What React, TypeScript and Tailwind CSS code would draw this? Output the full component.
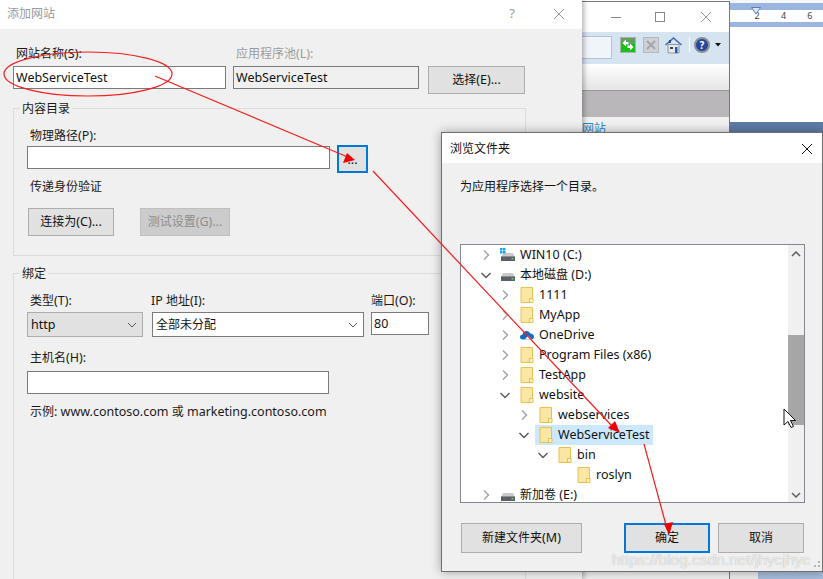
import React from "react";

const FONT = { fontFamily: '"Noto Sans", "Noto Sans CJK SC", sans-serif' };

function T({ s }: { s: string }) {
  const parts = s.split(/([\u3000-\u9fff\uff00-\uffef]+)/).filter(Boolean);
  return (
    <>
      {parts.map((p, i) =>
        /[\u3000-\u9fff\uff00-\uffef]/.test(p) ? (
          <span key={i}>{p}</span>
        ) : (
          <span key={i} className="text-[12.5px]">
            {p}
          </span>
        ),
      )}
    </>
  );
}

function Folder() {
  return (
    <svg width="14" height="17" viewBox="0 0 14 17" className="shrink-0">
      <path d="M1 .5H12.5V15.5H1Z" fill="#fbe7a4" stroke="#e8c04f" />
      <path d="M9.5 15.5V11.5H13V15.5Z" fill="#fff3c4" stroke="#e8c04f" />
    </svg>
  );
}

function Drive({ win }: { win?: boolean }) {
  return (
    <svg width="16" height="14" viewBox="0 0 16 14" className="shrink-0">
      <path d="M2 6.5 3.5 5H12.500L14 6.500V8H2Z" fill="#c9c9c9" />
      <rect x="1" y="8" width="14" height="5" fill="#5c6066" />
      <rect x="1" y="8" width="14" height="1" fill="#8d9196" />
      <rect x="11.500" y="10" width="2" height="1.500" fill="#4fd35f" />
      {win && (
        <g fill="#12a5ec">
          <rect x="0" y="0" width="2.500" height="2.500" />
          <rect x="3" y="0" width="2.500" height="2.500" />
          <rect x="0" y="3" width="2.500" height="2.500" />
          <rect x="3" y="3" width="2.500" height="2.500" />
        </g>
      )}
    </svg>
  );
}

function Cloud() {
  return (
    <svg width="14" height="10" viewBox="0 0 14 10" className="shrink-0">
      <path d="M3 9.500C1 9.500 0 8.300 0 7 0 5.700 1 4.800 2.300 4.800 2.800 2.500 4.500 1 6.500 1 8.300 1 9.600 2 10.300 3.500 12.400 3.500 14 5 14 7 14 8.500 13 9.500 11.500 9.500Z" fill="#0f6cc4" />
      <path d="M5 9.500 8 5.500 12 9.500Z" fill="#ffffff" />
    </svg>
  );
}

function Chev({ open }: { open?: boolean }) {
  return (
    <svg width="16" height="16" viewBox="0 0 16 16" className="shrink-0">
      {open ? (
        <path d="M3.500 6 8 10.500 12.500 6" fill="none" stroke="#5b5b5b" strokeWidth="1.500" />
      ) : (
        <path d="M6 3.500 10.500 8 6 12.500" fill="none" stroke="#a6a6a6" strokeWidth="1.500" />
      )}
    </svg>
  );
}

const PAD = ["pl-[17px]", "pl-[36px]", "pl-[55px]", "pl-[74px]", "pl-[93px]"];

type Row = { d: number; label: string; icon: "win" | "drive" | "folder" | "cloud"; chev?: "open" | "closed"; sel?: boolean };

const ROWS: Row[] = [
  { d: 0, label: "WIN10 (C:)", icon: "win", chev: "closed" },
  { d: 0, label: "本地磁盘 (D:)", icon: "drive", chev: "open" },
  { d: 1, label: "1111", icon: "folder", chev: "closed" },
  { d: 1, label: "MyApp", icon: "folder", chev: "closed" },
  { d: 1, label: "OneDrive", icon: "cloud", chev: "closed" },
  { d: 1, label: "Program Files (x86)", icon: "folder", chev: "closed" },
  { d: 1, label: "TestApp", icon: "folder", chev: "closed" },
  { d: 1, label: "website", icon: "folder", chev: "open" },
  { d: 2, label: "webservices", icon: "folder", chev: "closed" },
  { d: 2, label: "WebServiceTest", icon: "folder", chev: "open", sel: true },
  { d: 3, label: "bin", icon: "folder", chev: "open" },
  { d: 4, label: "roslyn", icon: "folder" },
  { d: 0, label: "新加卷 (E:)", icon: "drive", chev: "closed" },
];

function TreeRow({ r }: { r: Row }) {
  return (
    <div className={`flex h-[20px] shrink-0 items-center ${PAD[r.d]}`}>
      <span className="w-[16px] shrink-0">{r.chev && <Chev open={r.chev === "open"} />}</span>
      <div className={`ml-[3px] flex h-[20px] items-center gap-[5px] pl-[4px] pr-[4px] ${r.sel ? "bg-[#cce8ff]" : ""}`}>
        <span className="flex w-[14px] justify-center">
          {r.icon === "folder" && <Folder />}
          {r.icon === "cloud" && <Cloud />}
          {r.icon === "win" && <Drive win />}
          {r.icon === "drive" && <Drive />}
        </span>
        <span className="whitespace-nowrap text-[12px] leading-[20px] text-[#111]">
          <T s={r.label} />
        </span>
      </div>
    </div>
  );
}

function Label({ s, muted, className = "" }: { s: string; muted?: boolean; className?: string }) {
  return (
    <div className={`text-[12px] leading-[18px] whitespace-nowrap ${muted ? "text-[#9c9c9c]" : "text-[#1a1a1a]"} ${className}`}>
      <T s={s} />
    </div>
  );
}

function Input({ value, disabled, className = "" }: { value?: string; disabled?: boolean; className?: string }) {
  return (
    <div className={`flex h-[23px] items-center border border-[#7a7a7a] pl-[2px] pt-[1px] text-[12px] text-[#111] ${disabled ? "bg-[#f0f0f0]" : "bg-white"} ${className}`}>
      {value && <T s={value} />}
    </div>
  );
}

function Btn({ s, disabled, primary, className = "" }: { s: string; disabled?: boolean; primary?: boolean; className?: string }) {
  const tone = primary
    ? "border-2 border-[#0078d7] bg-[#e1e1e1] text-[#111]"
    : disabled
      ? "border border-[#bfbfbf] bg-[#cccccc] text-[#8e8e8e]"
      : "border border-[#adadad] bg-[#e1e1e1] text-[#111]";
  return (
    <div className={`flex shrink-0 items-center justify-center whitespace-nowrap text-[12px] ${tone} ${className}`}>
      <T s={s} />
    </div>
  );
}

function Group({ title, className = "", children }: { title: string; className?: string; children: React.ReactNode }) {
  return (
    <fieldset className={`ml-[13px] w-[513px] border border-[#dcdcdc] ${className}`}>
      <legend className="ml-[6px] h-[16px] px-[2px] text-[12px] leading-[18px] text-[#1a1a1a]">{title}</legend>
      <div className="pl-[13px]">{children}</div>
    </fieldset>
  );
}

function SelectBox({ text, gray, className = "" }: { text: string; gray?: boolean; className?: string }) {
  return (
    <div className={`flex h-[25px] items-center justify-between pl-[3px] pr-[3px] text-[12px] text-[#111] ${gray ? "border border-[#adadad] bg-[#e1e1e1]" : "border border-[#7a7a7a] bg-white"} ${className}`}>
      <span className={gray ? "pt-[2px]" : ""}>
        <T s={text} />
      </span>
      <svg width="14" height="14" viewBox="0 0 14 14">
        <path d="M3 5 7 9 11 5" fill="none" stroke="#555" strokeWidth="1" />
      </svg>
    </div>
  );
}

function MainDialog() {
  return (
    <div className="absolute left-0 top-0 h-[579px] w-[582px] overflow-hidden bg-[#f0f0f0] shadow-[2px_0_5px_rgba(0,0,0,0.3)]">
      <div className="flex h-[29px] items-center justify-between bg-white pb-[2px] pl-[7px] text-[12px] text-[#9a9a9a]">
        <span>添加网站</span>
        <div className="flex items-center">
          <span className="mr-[38px] text-[13px] text-[#999]">?</span>
          <svg width="12" height="12" viewBox="0 0 12 12" className="mr-[17px]">
            <path d="M1 1 11 11M11 1 1 11" stroke="#999" strokeWidth="1" />
          </svg>
        </div>
      </div>
      <div className="pt-[16px]">
        <div className="flex pl-[13px]">
          <div className="w-[213px]">
            <Label s="网站名称(S):" className="h-[21px] pl-[3px]" />
            <Input value="WebServiceTest" />
          </div>
          <div className="ml-[7px] w-[186px]">
            <Label muted s="应用程序池(L):" className="h-[21px] pl-[3px]" />
            <Input disabled value="WebServiceTest" />
          </div>
          <Btn s="选择(E)..." className="ml-[9px] mt-[21px] h-[28px] w-[97px]" />
        </div>
        <Group title="内容目录" className="mt-[6px] h-[156px]">
          <Label s="物理路径(P):" className="mt-[11px] h-[19px] pl-[3px]" />
          <div className="flex items-start">
            <Input className="w-[303px]" />
            <Btn primary s="..." className="ml-[7px] -mt-[1px] h-[28px] w-[31px] pt-[3px]" />
          </div>
          <Label s="传递身份验证" className="mt-[5px] h-[16px] pl-[3px]" />
          <div className="ml-[1px] mt-[14px] flex gap-[26px]">
            <Btn s="连接为(C)..." className="h-[28px] w-[86px]" />
            <Btn disabled s="测试设置(G)..." className="h-[28px] w-[90px]" />
          </div>
        </Group>
        <Group title="绑定" className="mt-[9px] h-[320px]">
          <div className="mt-[11px] flex">
            <div className="w-[116px]">
              <Label s="类型(T):" className="h-[20px] pl-[3px]" />
              <SelectBox gray text="http" />
            </div>
            <div className="ml-[9px] w-[212px]">
              <Label s="IP 地址(I):" className="h-[20px] -ml-[1px]" />
              <SelectBox text="全部未分配" />
            </div>
            <div className="ml-[7px] w-[58px]">
              <Label s="端口(O):" className="h-[20px]" />
              <Input value="80" />
            </div>
          </div>
          <Label s="主机名(H):" className="mt-[12px] h-[22px] pl-[3px]" />
          <Input className="w-[302px]" />
          <Label s="示例: www.contoso.com 或 marketing.contoso.com" className="mt-[9px] pl-[3px]" />
        </Group>
      </div>
    </div>
  );
}

function BrowseDialog() {
  return (
    <div className="absolute left-[441px] top-[132px] h-[440px] w-[382px] border border-[#6f6f6f] bg-[#f0f0f0] shadow-[0_0_10px_rgba(0,0,0,0.35)]">
      <div className="flex h-[30px] items-center justify-between bg-white pl-[8px] pt-[2px] text-[12px] text-[#111]">
        <span>浏览文件夹</span>
        <svg width="12" height="12" viewBox="0 0 12 12" className="mr-[9px]">
          <path d="M1 1 11 11M11 1 1 11" stroke="#111" strokeWidth="1" />
        </svg>
      </div>
      <div className="pl-[18px] pt-[15px]">
        <div className="h-[16px] text-[12px] leading-[18px] text-[#111]">为应用程序选择一个目录。</div>
        <div className="mt-[50px] flex h-[259px] w-[345px] border border-[#828790] bg-white">
          <div className="flex min-w-0 flex-1 flex-col overflow-hidden">
            {ROWS.map((r) => (
              <TreeRow key={r.label} r={r} />
            ))}
          </div>
          <div className="w-[16px] bg-[#f0f0f0]">
            <div className="flex h-[17px] items-center justify-center">
              <svg width="10" height="6" viewBox="0 0 10 6">
                <path d="M1 5 5 1 9 5" fill="none" stroke="#606060" strokeWidth="1.500" />
              </svg>
            </div>
            <div className="mt-[73px] h-[90px] w-[16px] bg-[#a6a6a6]" />
            <div className="mt-[61px] flex h-[17px] items-center justify-center">
              <svg width="10" height="6" viewBox="0 0 10 6">
                <path d="M1 1 5 5 9 1" fill="none" stroke="#606060" strokeWidth="1.500" />
              </svg>
            </div>
          </div>
        </div>
        <div className="mt-[20px] flex pl-[1px]">
          <Btn s="新建文件夹(M)" className="h-[30px] w-[121px]" />
          <Btn primary s="确定" className="ml-[42px] h-[30px] w-[86px]" />
          <Btn s="取消" className="ml-[8px] h-[30px] w-[86px]" />
        </div>
      </div>
    </div>
  );
}

function BrowserWindow() {
  return (
    <div className="absolute left-[582px] top-[1px] flex h-[578px] w-[148px] flex-col border-r border-t border-[#777] bg-[#f4f4f4]">
      <div className="flex h-[30px] shrink-0 items-center bg-white pl-[28px]">
        <svg width="12" height="12" viewBox="0 0 12 12"><path d="M1 6.500H11" stroke="#888" /></svg>
        <svg width="12" height="12" viewBox="0 0 12 12" className="ml-[32px]"><rect x="1.500" y="1.500" width="9" height="9" fill="none" stroke="#888" /></svg>
        <svg width="12" height="12" viewBox="0 0 12 12" className="ml-[34px]"><path d="M1 1 11 11M11 1 1 11" stroke="#999" /></svg>
      </div>
      <div className="flex h-[32px] shrink-0 items-start bg-[#d6e3f0] pt-[4px]">
        <div className="h-[23px] w-[30px] border border-l-0 border-[#b3c3d3] bg-[#f0f5fa]" />
        <div className="mt-[1px] flex h-[16px] items-center">
          <svg width="16" height="16" viewBox="0 0 16 16" className="ml-[8px]">
            <rect x=".5" y=".5" width="15" height="15" fill="#18c018" stroke="#a3b5a3" />
            <rect x="1" y="1" width="14" height="6" fill="#5f9f5f" />
            <path d="M2.500 6 6 2.500V5H8.500V7.500H6V9.500ZM13.500 10 10 13.500V11H7.500V8.500H10V6.500Z" fill="#fff" />
          </svg>
          <svg width="16" height="16" viewBox="0 0 16 16" className="ml-[7px]">
            <rect x=".5" y=".5" width="15" height="15" fill="#cdd0d4" stroke="#b5b9be" />
            <path d="M4 4 12 12M12 4 4 12" stroke="#a4a7aa" strokeWidth="2" />
          </svg>
          <svg width="17" height="17" viewBox="0 0 17 17" className="ml-[6px]">
            <path d="M3 7.500H14V16H3Z" fill="#e6e8ea" stroke="#8d96a0" />
            <path d="M.5 8 8.500 1 16.500 8" fill="none" stroke="#3c6aa8" strokeWidth="1.500" />
            <rect x="4" y="3" width="2" height="3" fill="#2b4f8a" />
            <rect x="5" y="10" width="3" height="2" fill="#3a4450" />
            <rect x="10" y="10" width="2.500" height="6" fill="#1f5bb0" />
          </svg>
          <div className="ml-[7px] h-[14px] w-[1px] bg-white" />
          <div className="ml-[4px] flex h-[16px] w-[16px] items-center justify-center rounded-full border-2 border-[#8a8f96] bg-[#24479c] text-[10px] font-bold text-white">?</div>
          <svg width="6" height="4" viewBox="0 0 6 4" className="ml-[5px]"><path d="M0 0H6L3 3.500Z" fill="#111" /></svg>
        </div>
      </div>
      <div className="h-[27px] shrink-0 border-b border-[#999] bg-gradient-to-b from-[#ffffff] to-[#e6e4e6]" />
      <div className="h-[26px] shrink-0 bg-[#b9b7b9]" />
      <div className="flex-1 bg-[#f1f1f1] pt-[5px] text-[12px] leading-[14px] text-[#2f8ccc]">网站</div>
    </div>
  );
}

function DocBack() {
  return (
    <div className="absolute left-[730px] top-0 flex h-[579px] w-[93px] flex-col bg-[#e9ecf2]">
      <div className="h-[3px] bg-[#f4f6fa]" />
      <div className="h-[7px] bg-[#9ab6e0]" />
      <div className="relative flex h-[12px] items-center justify-around bg-white pl-[14px] text-[9px] leading-[12px] text-[#444]">
        <span>2</span>
        <span>4</span>
        <span>6</span>
        <svg width="10" height="9" viewBox="0 0 10 9" className="absolute left-[21px] top-[-3px]">
          <path d="M.5.5H9.500L5 7Z" fill="#dbe6f6" stroke="#5c7fb5" />
        </svg>
      </div>
      <div className="h-[5px] bg-[#9ab6e0]" />
      <div className="h-[95px] bg-white" />
      <div className="h-[10px] bg-[#5f7ca8]" />
      <div className="flex flex-1">
        <div className="w-[28px] bg-[#ececec]" />
        <div className="flex-1 bg-[#a7bddc]" />
      </div>
    </div>
  );
}

function Overlay() {
  return (
    <svg width="823" height="579" viewBox="0 0 823 579" className="pointer-events-none absolute left-0 top-0">
      <ellipse cx="88" cy="74" rx="84" ry="22" fill="none" stroke="#f51c1c" strokeWidth="1.200" />
      <path d="M155 76 350 158" stroke="#f51c1c" strokeWidth="1.200" fill="none" />
      <path d="M355 160 343 163 347 153Z" fill="#f00000" />
      <path d="M373 171 612 426" stroke="#f51c1c" strokeWidth="1.200" fill="none" />
      <path d="M620 433 608 428 615 421Z" fill="#f00000" />
      <path d="M644 444 666 525" stroke="#f51c1c" strokeWidth="1.200" fill="none" />
      <path d="M669 535 664 524 673 522Z" fill="#f00000" />
      <path d="M784 409V425L788 421.500 791 427.500 793.500 426.500 790.500 420.500H795.500Z" fill="#fff" stroke="#111" strokeWidth="1" />
      <g fill="#b5b5b5">
        <rect x="818" y="561" width="2" height="2" />
        <rect x="814" y="565" width="2" height="2" />
        <rect x="818" y="565" width="2" height="2" />
      </g>
    </svg>
  );
}

export default function App() {
  return (
    <div style={FONT} className="relative h-[579px] w-[823px] overflow-hidden bg-white">
      <DocBack />
      <BrowserWindow />
      <MainDialog />
      <BrowseDialog />
      <Overlay />
      <div className="absolute left-[612px] top-[549px] whitespace-nowrap text-[15.500px] leading-[22px] text-white/75 [font-family:'Liberation_Sans',sans-serif] [text-shadow:0_0_1px_rgba(110,110,110,0.6)]">
        https://blog.csdn.net/jhycjhyc
      </div>
    </div>
  );
}
